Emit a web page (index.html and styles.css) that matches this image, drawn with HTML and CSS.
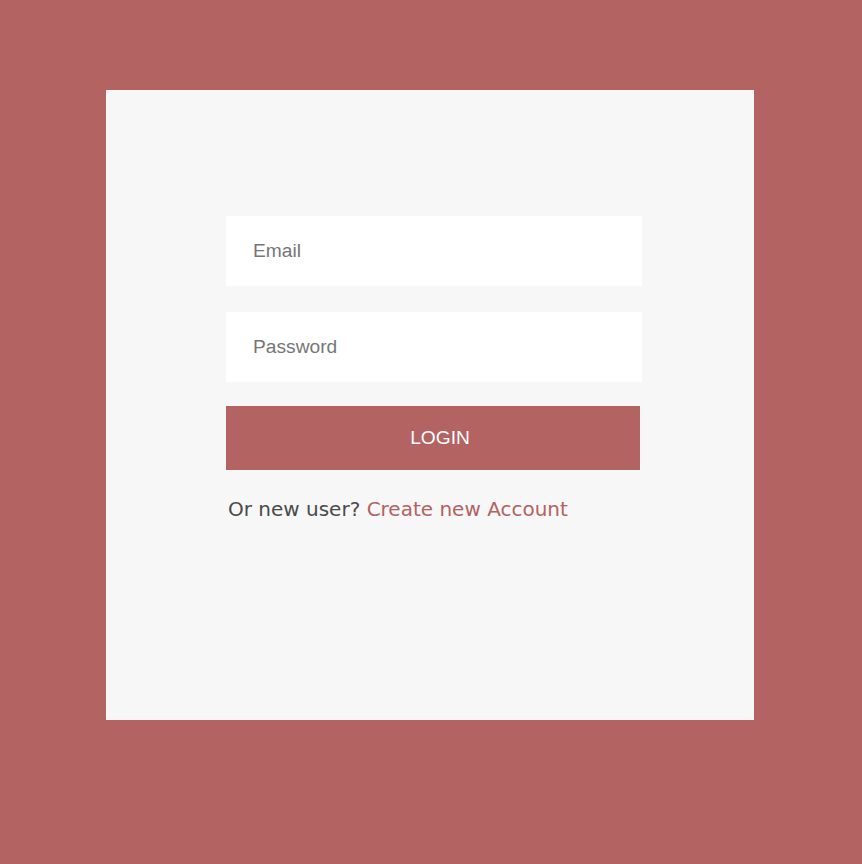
FILE: index.html
```html
<!DOCTYPE html>
<html>
<head>
<meta charset="utf-8">
<link rel="stylesheet" href="styles.css">
</head>
<body>
<div class="card">
  <form class="form">
    <input class="field" type="email" placeholder="Email">
    <input class="field field-pass" type="password" placeholder="Password">
    <button class="btn" type="button">LOGIN</button>
    <p class="note">Or new user? <a class="link" href="#">Create new Account</a></p>
  </form>
</div>
</body>
</html>
```
FILE: styles.css
```css
html, body {
  margin: 0;
  padding: 0;
}
body {
  background: #b36361;
  width: 862px;
  height: 864px;
  padding-top: 90px;
  box-sizing: border-box;
}
.card {
  margin-left: 106px;
  width: 648px;
  height: 630px;
  background: #f7f7f7;
  box-sizing: border-box;
  padding: 126px 0 0 120px;
}
.form {
  display: flex;
  flex-direction: column;
  align-items: flex-start;
  margin: 0;
}
.field {
  width: 416px;
  height: 70px;
  box-sizing: border-box;
  border: none;
  outline: none;
  background: #ffffff;
  padding: 0 27px;
  font-family: "Liberation Sans", Arial, sans-serif;
  font-size: 19.2px;
  color: #333;
  margin: 0;
}
.field::placeholder {
  color: #767676;
}
.field-pass {
  margin-top: 26px;
}
.btn {
  margin-top: 24px;
  width: 414px;
  height: 64px;
  border: none;
  background: #b36361;
  color: #ffffff;
  font-family: "Liberation Sans", Arial, sans-serif;
  font-size: 19.2px;
  padding: 0 0 0 14px;
  cursor: pointer;
}
.note {
  margin: 26px 0 0 2px;
  font-family: "DejaVu Sans", Verdana, sans-serif;
  font-size: 20px;
  line-height: 26px;
  color: #4a4a4a;
}
.link {
  color: #b36361;
  text-decoration: none;
}
```
